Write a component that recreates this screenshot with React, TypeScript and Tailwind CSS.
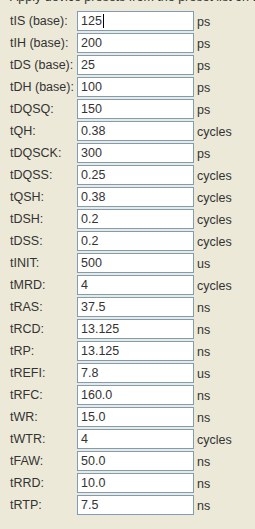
import React from "react";

const rows: [string, string, string][] = [
  ["tIS (base):", "125", "ps"],
  ["tIH (base):", "200", "ps"],
  ["tDS (base):", "25", "ps"],
  ["tDH (base):", "100", "ps"],
  ["tDQSQ:", "150", "ps"],
  ["tQH:", "0.38", "cycles"],
  ["tDQSCK:", "300", "ps"],
  ["tDQSS:", "0.25", "cycles"],
  ["tQSH:", "0.38", "cycles"],
  ["tDSH:", "0.2", "cycles"],
  ["tDSS:", "0.2", "cycles"],
  ["tINIT:", "500", "us"],
  ["tMRD:", "4", "cycles"],
  ["tRAS:", "37.5", "ns"],
  ["tRCD:", "13.125", "ns"],
  ["tRP:", "13.125", "ns"],
  ["tREFI:", "7.8", "us"],
  ["tRFC:", "160.0", "ns"],
  ["tWR:", "15.0", "ns"],
  ["tWTR:", "4", "cycles"],
  ["tFAW:", "50.0", "ns"],
  ["tRRD:", "10.0", "ns"],
  ["tRTP:", "7.5", "ns"],
];

const TimingRow = ({ label, value, unit }: { label: string; value: string; unit: string }) => (
  <div className="flex h-[22px] items-start">
    <span className="w-[67px] pt-[2px] text-[12.5px] leading-[16px]">{label}</span>
    <div className="flex h-[20px] w-[117px] items-center border border-[#7f9db9] bg-white pl-[3px] text-[12.5px]">
      {value}
      {label === "tIS (base):" && <span className="ml-[1px] h-[14px] w-px bg-black" />}
    </div>
    <span className="pl-[3px] pt-[3px] text-[12.5px] leading-[16px]">{unit}</span>
  </div>
);

export default function App() {
  return (
    <div
      className="h-[529px] w-[255px] overflow-hidden bg-[#ece9d8] pl-[10px] text-[#333333]"
      style={{ fontFamily: "'Liberation Sans', Arial, sans-serif" }}
    >
      <div className="mt-[-11px] h-[22px] whitespace-nowrap pt-[1px] text-[12.5px] leading-[14px]">
        Apply device presets from the preset list on the right
      </div>
      <div className="flex flex-col">
        {rows.map(([label, value, unit]) => (
          <TimingRow key={label} label={label} value={value} unit={unit} />
        ))}
      </div>
    </div>
  );
}
